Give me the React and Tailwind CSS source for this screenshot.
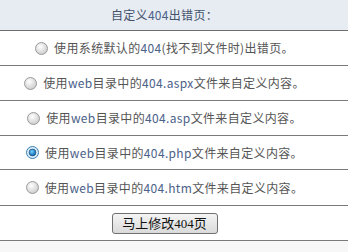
import React from "react";

const F = { fontFamily: '"Noto Sans CJK SC", "DejaVu Sans", sans-serif' };

function Radio({ checked }) {
  return (
    <svg width="13" height="13" viewBox="0 0 13 13" className="shrink-0">
      <defs>
        <radialGradient id="ru" cx="0.4" cy="0.35" r="0.7">
          <stop offset="0" stopColor="#ffffff" />
          <stop offset="1" stopColor="#c9c9c9" />
        </radialGradient>
        <radialGradient id="dot" cx="0.4" cy="0.35" r="0.7">
          <stop offset="0" stopColor="#6fd0ff" />
          <stop offset="1" stopColor="#0a5fa6" />
        </radialGradient>
      </defs>
      <circle cx="6.5" cy="6.5" r="6" fill={checked ? "#d8ecfa" : "url(#ru)"} stroke={checked ? "#3c7fb1" : "#9a9a9a"} strokeWidth="1" />
      {checked && <circle cx="6.5" cy="6.5" r="3.4" fill="url(#dot)" stroke="#0b3f6e" strokeWidth="0.6" />}
    </svg>
  );
}

function L({ children }) {
  return <span className="text-[#4a6189]">{children}</span>;
}

function Row({ checked, children, h = "h-[35px]" }) {
  return (
    <div className={`${h} border-b border-[#7a7a7a] flex items-center justify-center bg-white pr-[19px]`}>
      <div className="flex items-center gap-[6px]">
        <Radio checked={checked} />
        <span className="text-[12px] tracking-[0.35px] text-[#555555] whitespace-nowrap" style={F}>{children}</span>
      </div>
    </div>
  );
}

export default function App() {
  return (
    <div className="w-[348px] h-[252px] bg-[#f7f7f7] overflow-hidden">
      <div className="h-[31px] bg-[#e7ecf3] border-b border-[#6f6f6f] flex items-center justify-center pr-[19px]">
        <span className="text-[12px] tracking-[0.3px] text-[#44526b]" style={F}>自定义<L>404</L>出错页：</span>
      </div>
      <Row>使用系统默认的<L>404</L>(找不到文件时)出错页。</Row>
      <Row>使用<L>web</L>目录中的<L>404.aspx</L>文件来自定义内容。</Row>
      <Row>使用<L>web</L>目录中的<L>404.asp</L>文件来自定义内容。</Row>
      <Row checked h="h-[34px]">使用<L>web</L>目录中的<L>404.php</L>文件来自定义内容。</Row>
      <Row h="h-[36px]">使用<L>web</L>目录中的<L>404.htm</L>文件来自定义内容。</Row>
      <div className="h-[35px] border-b border-[#7a7a7a] flex items-center justify-center bg-white pr-[19px]">
        <button
          className="w-[106px] h-[21px] shrink-0 border border-[#707070] rounded-[3px] bg-gradient-to-b from-[#f4f4f4] to-[#dadada] text-[13px] text-[#111] flex items-center justify-center leading-none"
          style={{ fontFamily: '"Liberation Serif", "Noto Sans CJK SC", serif' }}
        >
          马上修改404页
        </button>
      </div>
    </div>
  );
}
